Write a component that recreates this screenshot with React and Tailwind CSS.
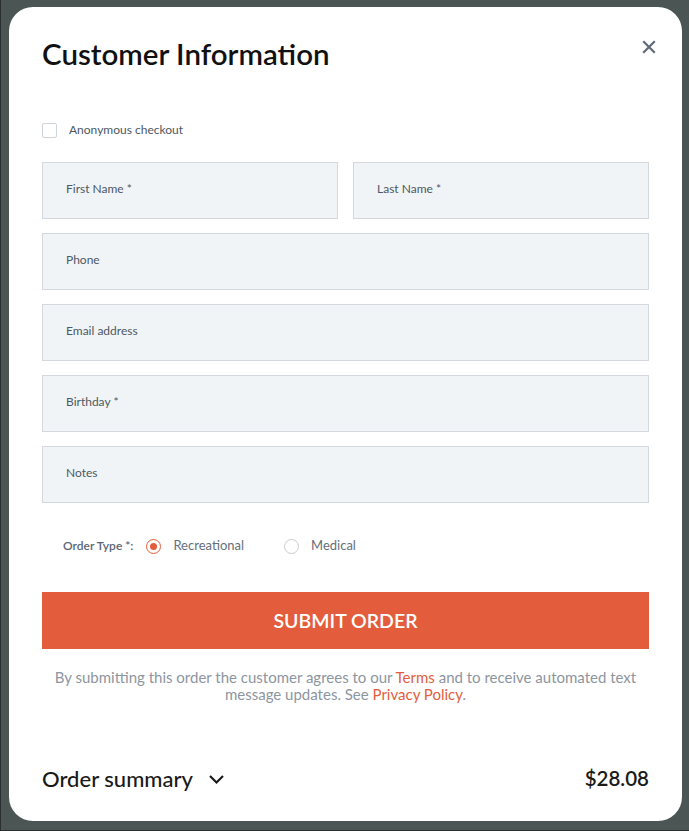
import React from "react";

const font = { fontFamily: "Lato, 'Liberation Sans', sans-serif" };

function Field({ label, className = "" }) {
  return (
    <div className={"h-[57px] bg-[#f0f4f7] border border-[#d3d9de] flex items-center pl-[23px] pb-[3px] " + className}>
      <span className="text-[12px] text-[#4d5862]">{label}</span>
    </div>
  );
}

function Radio({ checked, label }) {
  return (
    <div className="flex items-center">
      <div className={"w-[15px] h-[15px] rounded-full border flex items-center justify-center bg-white " + (checked ? "border-[#e35d3d]" : "border-[#c8cdd2]")}>
        {checked && <div className="w-[7px] h-[7px] rounded-full bg-[#e35d3d]" />}
      </div>
      <span className="ml-[12px] text-[13px] text-[#66707a]">{label}</span>
    </div>
  );
}

export default function App() {
  return (
    <div style={font} className="w-[689px] h-[831px] bg-[#4b5654] border-l border-b border-[#2a2e2e] pt-[7px] pl-[8px] overflow-hidden">
      <div className="relative w-[673px] h-[814px] bg-white rounded-[24px] px-[33px] pt-[30px]">
        <button className="absolute top-[33px] right-[26px] text-[#5f6b78]">
          <svg width="14" height="14" viewBox="0 0 14 14" fill="none" stroke="currentColor" strokeWidth="2.2" strokeLinecap="square">
            <path d="M2 2 L12 12 M12 2 L2 12" />
          </svg>
        </button>
        <h1 className="text-[29.5px] leading-[34px] font-semibold text-[#111]">Customer Information</h1>

        <div className="mt-[51px] flex items-center h-[16px]">
          <div className="w-[15px] h-[15px] border border-[#cfd4d9] rounded-[2px] bg-white" />
          <span className="ml-[12px] text-[12px] text-[#4d5862]">Anonymous checkout</span>
        </div>

        <div className="mt-[24px] flex flex-col gap-[14px]">
          <div className="flex gap-[15px]">
            <Field label="First Name *" className="flex-1" />
            <Field label="Last Name *" className="flex-1" />
          </div>
          <Field label="Phone" />
          <Field label="Email address" />
          <Field label="Birthday *" />
          <Field label="Notes" />
        </div>

        <div className="mt-[33px] flex items-center pl-[21px] h-[20px]">
          <span className="text-[12px] font-semibold text-[#5a6672] mr-[13px]">Order Type *:</span>
          <Radio checked label="Recreational" />
          <div className="w-[40px]" />
          <Radio label="Medical" />
        </div>

        <button className="mt-[36px] w-full h-[57px] bg-[#e35d3d] text-white text-[19.5px] font-semibold">
          SUBMIT ORDER
        </button>

        <p className="mt-[20px] text-center text-[15px] leading-[17px] text-[#8d969f] px-[4px]">
          By submitting this order the customer agrees to our <span className="text-[#e35d3d]">Terms</span> and to receive automated text message updates. See <span className="text-[#e35d3d]">Privacy Policy</span>.
        </p>

        <div className="mt-[59px] flex items-center justify-between">
          <div className="flex items-center">
            <span className="text-[22px] font-medium text-[#1a1a1a]">Order summary</span>
            <svg className="ml-[14px]" width="19" height="18" viewBox="0 0 19 18" fill="none" stroke="#1a1a1a" strokeWidth="2.2">
              <path d="M3 6 L9.5 12.5 L16 6" />
            </svg>
          </div>
          <span className="text-[20.5px] font-semibold text-[#1a1a1a]">$28.08</span>
        </div>
      </div>
    </div>
  );
}
